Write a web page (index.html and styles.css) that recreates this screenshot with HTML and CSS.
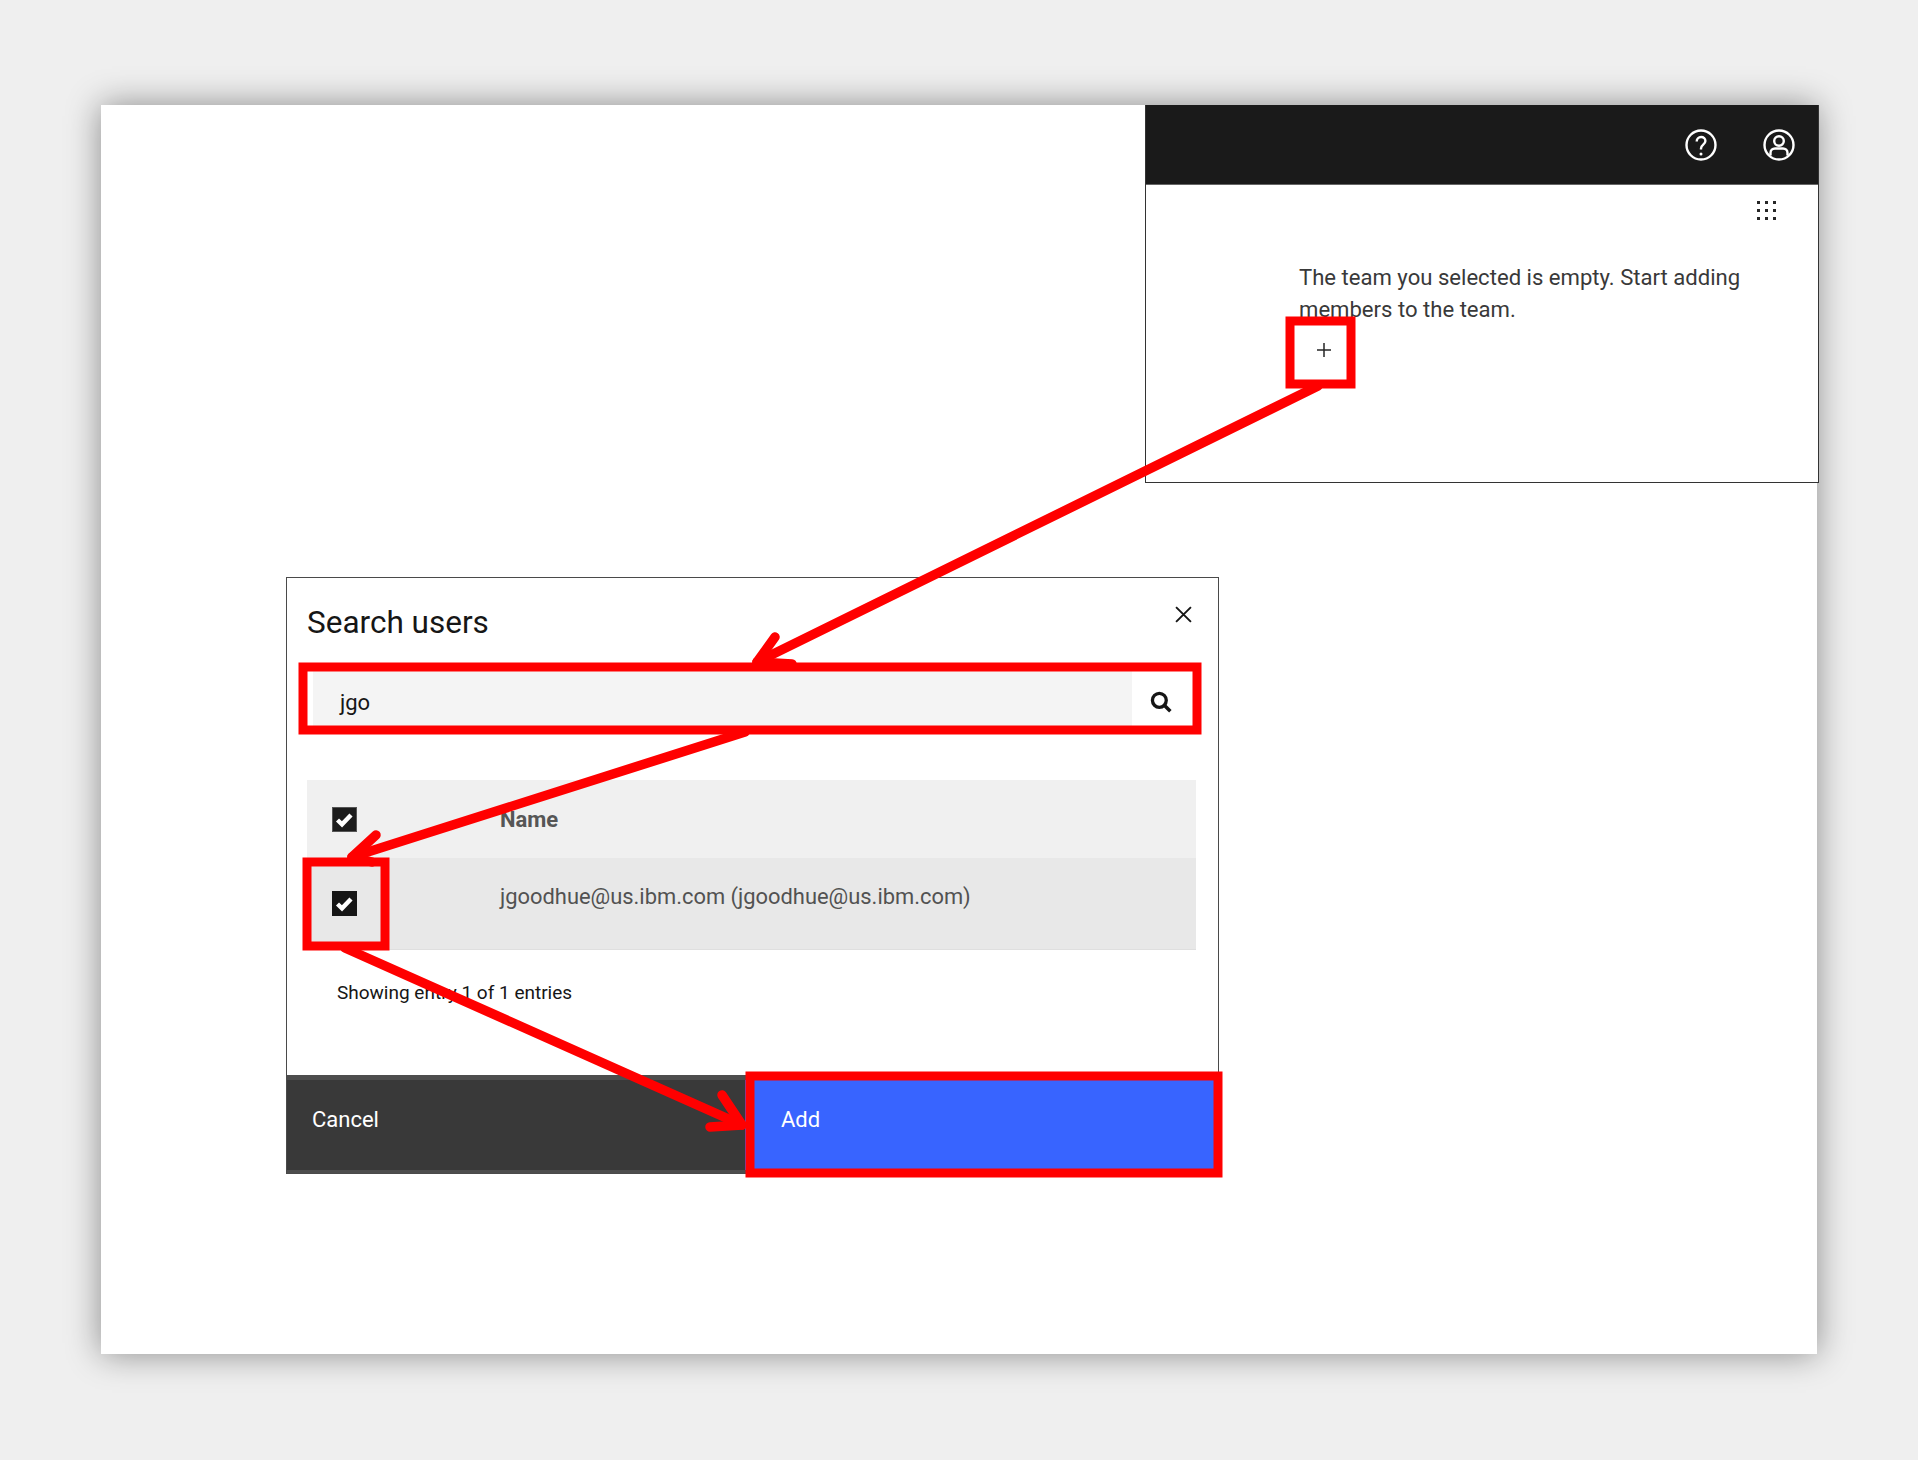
FILE: index.html
```html
<!DOCTYPE html>
<html lang="en">
<head>
    <meta charset="UTF-8">
    <meta name="viewport" content="width=device-width, initial-scale=1.0">
    <title>Add team members</title>
    <link rel="stylesheet" href="styles.css">
</head>
<body>
    <div class="page">
        <div class="canvas">
            <!-- Team panel -->
            <section class="panel">
                <header class="panel-bar">
                    <svg class="bar-icon" viewBox="0 0 32 32" fill="none" stroke="#fff" stroke-width="2.400">
                        <circle cx="16" cy="16" r="14.500"/>
                        <path d="M11.700 12.600c0-2.700 1.900-4.600 4.400-4.600 2.500 0 4.300 1.700 4.300 4 0 3.600-4.400 3.700-4.400 7.400v1"/>
                        <circle cx="16" cy="25" r="1.500" fill="#fff" stroke="none"/>
                    </svg>
                    <svg class="bar-icon" viewBox="0 0 32 32" fill="none" stroke="#fff" stroke-width="2.400">
                        <circle cx="16" cy="16" r="14.500"/>
                        <circle cx="16" cy="12" r="4.800"/>
                        <path d="M7.500 26.500v-2.500c0-2.800 2-4.500 4.500-4.500h8c2.500 0 4.500 1.700 4.500 4.500v2.500"/>
                    </svg>
                </header>
                <div class="panel-body">
                    <div class="panel-tools">
                        <svg class="grid-icon" viewBox="0 0 20 20" fill="#262626">
                            <rect x="1" y="1" width="3" height="3"/><rect x="9" y="1" width="3" height="3"/><rect x="17" y="1" width="3" height="3"/>
                            <rect x="1" y="9" width="3" height="3"/><rect x="9" y="9" width="3" height="3"/><rect x="17" y="9" width="3" height="3"/>
                            <rect x="1" y="17" width="3" height="3"/><rect x="9" y="17" width="3" height="3"/><rect x="17" y="17" width="3" height="3"/>
                        </svg>
                    </div>
                    <p class="empty-text">The team you selected is empty. Start adding members to the team.</p>
                    <svg class="plus-icon" viewBox="0 0 14 14" stroke="#262626" stroke-width="1.500">
                        <path d="M7 0v14M0 7h14"/>
                    </svg>
                </div>
            </section>

            <!-- Search users dialog -->
            <section class="modal">
                <div class="modal-head">
                    <h2 class="modal-title">Search users</h2>
                    <svg class="close-icon" viewBox="0 0 16 16" stroke="#161616" stroke-width="1.800">
                        <path d="M1 1l14 14M15 1L1 15"/>
                    </svg>
                </div>
                <div class="search-row">
                    <div class="search-field">jgo</div>
                    <div class="search-btn">
                        <svg class="search-icon" viewBox="0 0 20 20" fill="none" stroke="#161616">
                            <circle cx="8.500" cy="8.500" r="6.300" stroke-width="3"/>
                            <path d="M13 13l5.500 5.500" stroke-width="3.200"/>
                        </svg>
                    </div>
                </div>
                <div class="table">
                    <div class="table-head">
                        <span class="check check-head"><svg viewBox="0 0 25 25" fill="none" stroke="#fff" stroke-width="4.400"><path d="M5.500 13l4.500 4.300 9-9.300"/></svg></span>
                        <span class="col-name">Name</span>
                    </div>
                    <div class="table-row">
                        <span class="check"><svg viewBox="0 0 25 25" fill="none" stroke="#fff" stroke-width="4.400"><path d="M5.500 13l4.500 4.300 9-9.300"/></svg></span>
                        <span class="col-user">jgoodhue@us.ibm.com (jgoodhue@us.ibm.com)</span>
                    </div>
                </div>
                <p class="entries">Showing entry 1 of 1 entries</p>
                <div class="modal-foot">
                    <div class="btn btn-cancel">Cancel</div>
                    <div class="btn btn-add">Add</div>
                </div>
            </section>
        </div>

        <!-- Red callouts, drawn over everything -->
        <svg class="callouts" viewBox="0 0 1918 1460" fill="none" stroke="#ff0000">
            <g stroke-width="9">
                <rect x="1290" y="321" width="61" height="63"/>
                <rect x="303" y="667" width="894" height="63"/>
                <rect x="307" y="862" width="78" height="84"/>
                <rect x="750" y="1076" width="468" height="97"/>
            </g>
            <g stroke-width="9.500" stroke-linecap="round" stroke-linejoin="round">
                <path d="M1318 386L757 662"/>
                <path d="M775 637L757 662L792 664"/>
                <path d="M745 732L352 857"/>
                <path d="M376 835L352 857L372 862"/>
                <path d="M345 948L742 1125"/>
                <path d="M722 1095L742 1125L710 1127"/>
            </g>
        </svg>
    </div>
</body>
</html>
```

FILE: styles.css
```css
body {
    margin: 0;
    background-color: #efefef;
    font-family: "Roboto", "Liberation Sans", sans-serif;
    color: #161616;
}
.page {
    position: relative;
    width: 1918px;
    height: 1460px;
    padding: 105px 0 0 101px;
    box-sizing: border-box;
    overflow: hidden;
}
.canvas {
    position: relative;
    width: 1716px;
    height: 1249px;
    background-color: #fff;
    box-shadow: 0 0 32px rgba(0, 0, 0, 0.42);
}
.callouts {
    position: absolute;
    left: 0;
    top: 0;
    width: 1918px;
    height: 1460px;
    pointer-events: none;
}

/* Team panel */
.panel {
    position: absolute;
    left: 1044px;
    top: 0;
    width: 674px;
    height: 378px;
    box-sizing: border-box;
    border: 1px solid #333;
    border-top: none;
    background-color: #fff;
    display: flex;
    flex-direction: column;
}
.panel-bar {
    height: 80px;
    box-sizing: border-box;
    background-color: #1a1a1a;
    border-bottom: 1px solid #666;
    display: flex;
    justify-content: flex-end;
    align-items: center;
    gap: 46px;
    padding: 0 23px 0 0;
}
.bar-icon {
    width: 32px;
    height: 32px;
}
.panel-body {
    display: flex;
    flex-direction: column;
    padding: 15px 0 0 153px;
}
.panel-tools {
    display: flex;
    justify-content: flex-end;
    padding-right: 42px;
}
.grid-icon {
    width: 20px;
    height: 20px;
}
.empty-text {
    margin: 42px 0 0;
    width: 470px;
    font-size: 22.100px;
    line-height: 31.500px;
    color: #393939;
}
.plus-icon {
    width: 14px;
    height: 14px;
    margin: 18px 0 0 18px;
}

/* Search dialog */
.modal {
    position: absolute;
    left: 185px;
    top: 472px;
    width: 933px;
    height: 597px;
    box-sizing: border-box;
    border: 1px solid #4a4a4a;
    background-color: #fff;
    display: flex;
    flex-direction: column;
}
.modal-head {
    height: 93px;
    display: flex;
    justify-content: space-between;
    padding: 0 26px 0 20px;
}
.modal-title {
    margin: 27px 0 0;
    font-size: 31.500px;
    line-height: 36px;
    font-weight: 400;
}
.close-icon {
    width: 17px;
    height: 17px;
    margin-top: 28px;
}
.search-row {
    display: flex;
    height: 55px;
    margin-left: 26px;
}
.search-field {
    width: 819px;
    background-color: #f4f4f4;
    box-sizing: border-box;
    padding: 4px 0 0 27px;
    font-size: 22px;
    line-height: 55px;
}
.search-btn {
    width: 58px;
    padding-top: 7px;
    box-sizing: border-box;
    display: flex;
    align-items: center;
    justify-content: center;
}
.search-icon {
    width: 22px;
    height: 22px;
}
.table {
    margin: 54px 22px 0 20px;
}
.table-head,
.table-row {
    display: flex;
    align-items: center;
    padding-left: 25px;
}
.table-head {
    height: 78px;
    background-color: #f0f0f0;
}
.table-row {
    height: 92px;
    box-sizing: border-box;
    background-color: #e8e8e8;
    border-bottom: 1px solid #dfdfdf;
}
.check {
    width: 25px;
    height: 25px;
    flex: none;
    background-color: #161616;
    box-sizing: border-box;
}
.check svg {
    display: block;
    width: 25px;
    height: 25px;
}
.check-head {
    background-color: #1c1c1c;
    outline: 1px solid #555;
    outline-offset: -1px;
}
.col-name {
    margin-left: 143px;
    font-size: 22px;
    font-weight: 700;
    color: #565656;
}
.col-user {
    margin: -15px 0 0 143px;
    font-size: 21.900px;
    color: #525252;
}
.entries {
    flex: 1;
    margin: 0;
    padding: 31px 0 0 50px;
    font-size: 19px;
    line-height: 24px;
}
.modal-foot {
    height: 98px;
    box-sizing: border-box;
    border-top: 5px solid #4d4d4d;
    border-bottom: 3px solid #4d4d4d;
    display: flex;
    background-color: #393939;
}
.btn {
    display: flex;
    align-items: center;
    padding-bottom: 11px;
    box-sizing: border-box;
    font-size: 22px;
    color: #fff;
}
.btn-cancel {
    width: 458px;
    padding-left: 25px;
}
.btn-add {
    flex: 1;
    padding-left: 36px;
    background-color: #3864ff;
}
```
